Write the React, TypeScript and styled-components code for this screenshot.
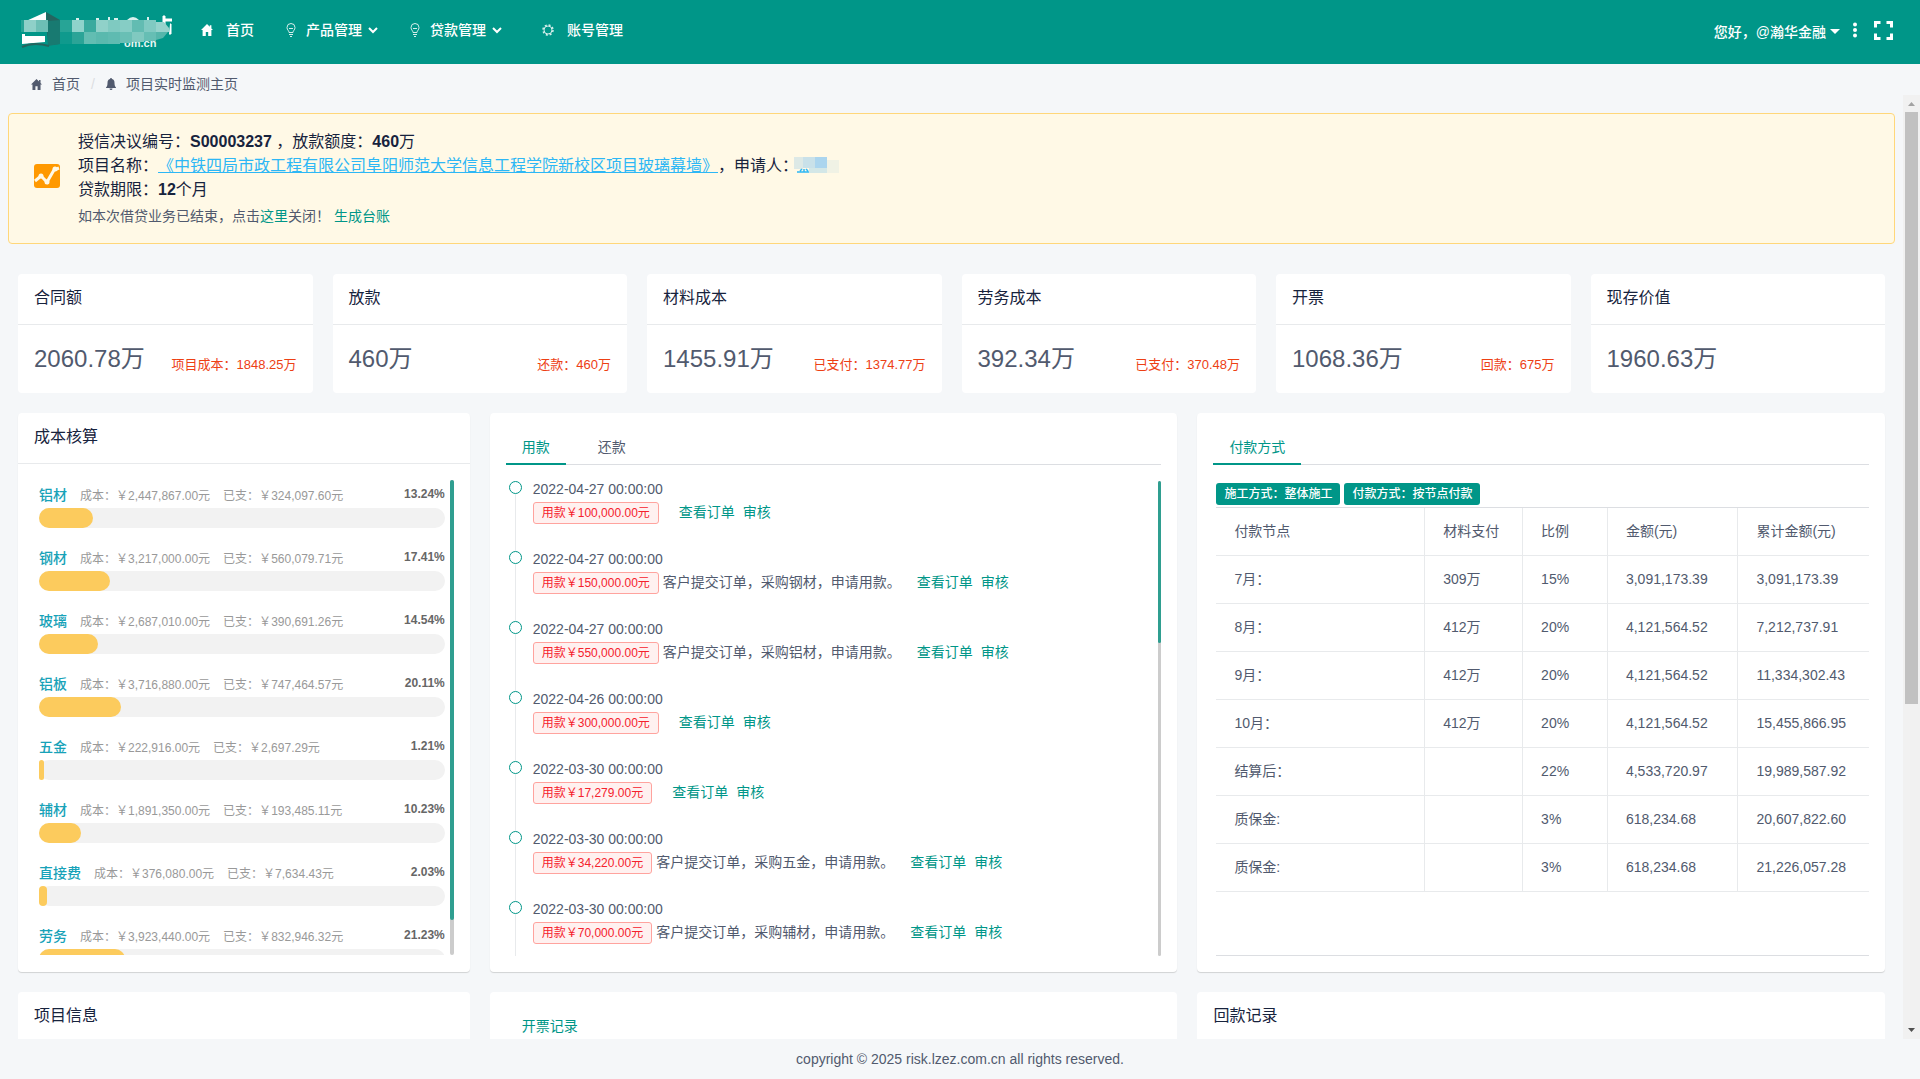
import React, { useState } from "react";
import styled, { createGlobalStyle } from "styled-components";

const GREEN = "#009688";

const GlobalStyle = createGlobalStyle`
  *, *::before, *::after { box-sizing: border-box; }
  body {
    margin: 0;
    background: #f5f7f9;
    color: #515a6e;
    font-family: "Liberation Sans", "Noto Sans CJK SC", sans-serif;
    font-size: 14px;
    line-height: 24px;
    text-spacing-trim: space-all;
  }
  h2, h3, p, ul, dl { margin: 0; padding: 0; font-weight: 400; }
  ul { list-style: none; }
  a { color: ${GREEN}; text-decoration: none; }
  button { font: inherit; border: 0; background: none; padding: 0; cursor: pointer; }
`;

const Page = styled.div`
  height: 100vh;
  display: flex;
  flex-direction: column;
`;

/* ---------- header ---------- */

const Header = styled.header`
  flex: none;
  display: flex;
  align-items: center;
  height: 64px;
  padding: 0 27px 0 20px;
  background: ${GREEN};
  color: #fff;
  font-weight: 500;
`;

const Nav = styled.nav`
  display: flex;
  flex: 1;
  align-items: center;
  gap: 32px;
  margin-left: 29px;
  padding-bottom: 4px;
`;

const NavItem = styled.a<{ $gap: number }>`
  display: flex;
  align-items: center;
  gap: ${(p) => p.$gap}px;
  color: #fff;
`;

const NavLabel = styled.span`
  display: flex;
  align-items: center;
  gap: 6px;
`;

const GearSlot = styled.span`
  display: flex;
  margin-left: 8px;
`;

const UserArea = styled.div`
  display: flex;
  align-items: center;
  button { display: flex; align-items: center; color: #fff; }
`;

const UserButton = styled.button`
  gap: 4px;
  margin-right: 12px;
  && { font-weight: 500; }
`;

const MoreButton = styled.button`
  margin-right: 16px;
`;

/* ---------- breadcrumb ---------- */

const Breadcrumb = styled.nav`
  flex: none;
  display: flex;
  align-items: center;
  height: 31px;
  padding: 9px 31px 0;
`;

const Crumb = styled.a`
  display: flex;
  align-items: center;
  gap: 10px;
  color: #515a6e;
`;

const Slash = styled.span`
  margin: 0 11px;
  color: #dcdee2;
`;

/* ---------- scrolling body ---------- */

const Body = styled.div`
  flex: 1;
  min-height: 0;
  display: flex;
`;

const Content = styled.main`
  flex: 1;
  min-width: 0;
  overflow: hidden;
  padding: 18px 8px 0;
`;

const PageScroll = styled.div`
  flex: none;
  width: 17px;
  display: flex;
  flex-direction: column;
  align-items: center;
  justify-content: space-between;
  background: #f1f1f1;
`;

const ScrollTrack = styled.div`
  flex: 1;
  align-self: stretch;
  padding: 0 2px;
`;

const ScrollThumb = styled.div`
  height: 65%;
  background: #c1c1c1;
`;

const ScrollArrow = styled.svg`
  display: block;
  width: 17px;
  height: 17px;
`;

const Alert = styled.section`
  display: flex;
  align-items: center;
  gap: 18px;
  height: 131px;
  padding: 0 25px;
  border: 1px solid #ffd77a;
  border-radius: 4px;
  background: #fff9e6;
`;

const AlertIcon = styled.svg`
  flex: none;
  width: 26px;
  height: 26px;
  margin-bottom: 6px;
`;

const AlertTitle = styled.h2`
  font-size: 16px;
  color: #17233d;
  strong { font-weight: 700; }
`;

const ProjectLink = styled.a`
  color: #2db7f5;
  text-decoration: underline;
`;

const AlertNote = styled.p`
  line-height: 22px;
  margin-top: 3px;
`;

const Masked = styled.svg`
  width: 45px;
  height: 16px;
  vertical-align: -2px;
  margin-left: -4px;
`;

const Columns = styled.div<{ $cols: string; $top: number }>`
  display: grid;
  grid-template-columns: ${(p) => p.$cols};
  margin-top: ${(p) => p.$top}px;
`;

const Cell = styled.div`
  min-width: 0;
  display: flex;
  flex-direction: column;
  padding: 0 10px;
`;

const Card = styled.section<{ $shade?: boolean }>`
  flex: 1;
  background: #fff;
  border-radius: 4px;
  box-shadow: ${(p) => (p.$shade ? "0 1px 1px rgba(0, 0, 0, 0.15)" : "none")};
`;

const CardTitle = styled.h2`
  height: 51px;
  padding: 12px 16px;
  border-bottom: 1px solid #e8eaec;
  font-size: 16px;
  color: #17233d;
`;

const StatBody = styled.div`
  display: flex;
  justify-content: space-between;
  height: 68px;
  padding: 18px 16px 0;
`;

const StatValue = styled.span`
  font-size: 24px;
  line-height: 32px;
`;

const StatNote = styled.span`
  padding-top: 10px;
  font-size: 13px;
  color: #ed4014;
`;

/* ---------- lists with a slim scrollbar ---------- */

const ListFrame = styled.div`
  display: flex;
  padding: 16px;
`;

const ListView = styled.div`
  flex: 1;
  min-width: 0;
  height: 475px;
  overflow: hidden;
`;

const SlimBar = styled.div<{ $w: number }>`
  flex: none;
  width: ${(p) => p.$w}px;
  border-radius: 2px;
  background: #ccc;
`;

const SlimThumb = styled.div<{ $share: number }>`
  height: ${(p) => p.$share}%;
  border-radius: 2px;
  background: #2f9e90;
`;

const CostItem = styled.li`
  height: 63px;
  padding: 4px 5px 0;
`;

const CostHead = styled.div`
  display: flex;
  gap: 13px;
  height: 24px;
  font-size: 12px;
  color: #999;
`;

const CostName = styled.h3`
  font-size: 14px;
  font-weight: 500;
  line-height: 22px;
  color: #17a2b8;
`;

const CostRate = styled.strong`
  margin-left: auto;
  line-height: 20px;
  color: #666;
`;

const Track = styled.div`
  height: 20px;
  border-radius: 10px;
  background: #f2f2f2;
`;

const Fill = styled.div`
  height: 100%;
  border-radius: 10px;
  background: #fccb5d;
`;

/* ---------- tabs ---------- */

const TopPad = styled.div`
  display: flow-root;
`;

const TabBar = styled.div`
  display: flex;
  gap: 16px;
  height: 36px;
  margin: 16px 16px 0;
  border-bottom: 1px solid #dcdee2;
`;

const Tab = styled.button<{ $active?: boolean }>`
  && { padding: 2px 16px 0; }
  height: 36px;
  border-bottom: 2px solid ${(p) => (p.$active ? GREEN : "transparent")};
  color: ${(p) => (p.$active ? GREEN : "#515a6e")};
`;

/* ---------- timeline ---------- */

const Event = styled.li`
  display: flex;
  gap: 11px;
  height: 70px;
  padding-left: 3px;
`;

const Rail = styled.div`
  display: flex;
  flex-direction: column;
  align-items: center;
  width: 13px;
  &::before {
    content: "";
    flex: none;
    width: 13px;
    height: 13px;
    border: 1px solid ${GREEN};
    border-radius: 50%;
  }
  &::after {
    content: "";
    flex: 1;
    width: 1px;
    background: #e8eaec;
  }
`;

const EventDate = styled.time`
  display: block;
  line-height: 17px;
  margin-bottom: 4px;
`;

const EventRow = styled.div`
  display: flex;
  gap: 4px;
  height: 22px;
  line-height: 20px;
`;

const MoneyTag = styled.span`
  padding: 0 8px;
  border: 1px solid #ffa39e;
  border-radius: 3px;
  background: #fff1f0;
  color: #f5222d;
  font-size: 12px;
`;

const EventLinks = styled.span`
  display: flex;
  gap: 8px;
  margin-left: 12px;
`;

/* ---------- payment table ---------- */

const PayPanel = styled.div`
  height: 475px;
  margin: 16px;
  padding: 2px 0 0 3px;
`;

const PayInner = styled.div`
  height: 473px;
  border-bottom: 1px solid #dcdee2;
`;

const Badges = styled.div`
  display: flex;
  gap: 4px;
  margin-bottom: 2px;
`;

const Badge = styled.span`
  padding: 0 8px;
  border-radius: 3px;
  background: ${GREEN};
  color: #fff;
  font-size: 12px;
  font-weight: 500;
  line-height: 22px;
`;

const Table = styled.table`
  width: 100%;
  table-layout: fixed;
  border-collapse: separate;
  border-spacing: 0;
  border-top: 1px solid #dcdee2;
  th, td {
    height: 48px;
    padding: 0 0 2px 18px;
    border-bottom: 1px solid #e8eaec;
    border-right: 1px solid #e8eaec;
    font-weight: 400;
    text-align: left;
  }
  th:last-child, td:last-child { border-right: 0; }
`;

const Footer = styled.footer`
  flex: none;
  height: 40px;
  line-height: 40px;
  text-align: center;
`;

/* ---------- icons ---------- */

const LogoText = styled.text`
  font-size: 11px;
  font-weight: 700;
  fill: #e6f5f3;
`;

const Logo = () => {
  const cells: [number, number, number, number, string][] = [
    [4, 10, 12, 12, "#8fd0c8"], [16, 10, 12, 12, "#6dbfb5"],
    [40, 10, 12, 12, "#27a496"], [52, 10, 12, 12, "#8fd3cb"], [64, 10, 12, 12, "#3aaa9e"], [76, 10, 12, 12, "#90d1c9"],
    [88, 10, 12, 12, "#7fcac1"], [100, 10, 12, 12, "#86cdc5"], [112, 10, 12, 12, "#62bcb2"], [124, 10, 12, 12, "#80cac2"],
    [40, 22, 12, 12, "#0f9a8d"], [52, 22, 12, 12, "#2ba497"], [64, 22, 12, 12, "#62bdb2"], [76, 22, 12, 12, "#5ab9ae"],
    [88, 22, 12, 12, "#5fbbb1"], [100, 22, 12, 11, "#69bfb5"], [112, 22, 12, 10, "#80c9c0"], [124, 22, 12, 9, "#66beb4"],
  ];
  return (
    <svg width="152" height="44" viewBox="0 0 152 44" role="img" aria-label="logo">
      <path d="M6 11 26 2v9z" fill="#fff" />
      <path d="M26 2 40 10v24l-12 1z" fill="#24655f" />
      <path d="M28 11l12-1v24l-12 2z" fill="#187a71" />
      <path d="M2 24h3v2h20v6L2 34z" fill="#fff" />
      <path d="M1 10h3v12H1z" fill="#27a496" />
      <path d="M2 37c8-4 17-4 27-1" stroke="#24655f" strokeWidth="2" fill="none" />
      <path d="M107 10q6-6 12 0zM56 8h3v2h-3zM76 8h3v2h-3zM88 7h2v3h-2zM94 8h4v2h-4zM127 7h2v3h-2z" fill="#d9f0ed" />
      <path d="M143 6h2v3h7v2h-7v5h-2zM150 14h1v10h-2" fill="#fff" stroke="#fff" />
      <LogoText x="104" y="37">om.cn</LogoText>
      {cells.map(([x, y, w, h, c], i) => (
        <rect key={i} x={x} y={y} width={w} height={h} fill={c} />
      ))}
      <path d="M136 12h8l5 6v4h-13z" fill="#96d3cc" />
      <path d="M136 22h12l-5 6-7 2z" fill="#55b6ab" />
    </svg>
  );
};

const HomeIcon = ({ size }: { size: number }) => (
  <svg width={size} height={size} viewBox="0 0 12 12" fill="currentColor" aria-hidden="true">
    <path d="M6 0 0 6h1.600v6h3.200V8h2.400v4h3.200V6H12L10.400 4.400V1.200H8.800v1.600z" />
  </svg>
);

const BulbIcon = () => (
  <svg width="10" height="14" viewBox="0 0 10 14" fill="none" stroke="#d5eeeb" aria-hidden="true">
    <path d="M3 9.500C3 7.500 1 7 1 4.500a4 4 0 0 1 8 0C9 7 7 7.500 7 9.500zM3 11.500h4M4 13.500h2M3 5l1 1 1-1 1 1 1-1" />
  </svg>
);

const GearIcon = () => (
  <svg width="12" height="12" viewBox="0 0 12 12" fill="none" stroke="#d5eeeb" aria-hidden="true">
    <circle cx="6" cy="6" r="5" strokeWidth="1.500" strokeDasharray="2 1.930" />
    <circle cx="6" cy="6" r="4" />
  </svg>
);

const Chevron = () => (
  <svg width="10" height="8" viewBox="0 0 10 8" fill="none" stroke="#fff" strokeWidth="2" aria-hidden="true">
    <path d="m1 2 4 4 4-4" />
  </svg>
);

const BellIcon = () => (
  <svg width="10" height="12" viewBox="0 0 10 12" fill="currentColor" aria-hidden="true">
    <path d="M5 0a1 1 0 0 1 1 1c2 .5 2.500 2 2.500 4 0 2.500.5 3.500 1.500 4.500v.5H0v-.5C1 8.500 1.500 7.500 1.500 5c0-2 .5-3.500 2.500-4a1 1 0 0 1 1-1zM3.500 10.500h3a1.500 1.500 0 0 1-3 0z" />
  </svg>
);

/* ---------- data ---------- */

const stats = [
  { title: "合同额", value: "2060.78万", note: "项目成本：1848.25万" },
  { title: "放款", value: "460万", note: "还款：460万" },
  { title: "材料成本", value: "1455.91万", note: "已支付：1374.77万" },
  { title: "劳务成本", value: "392.34万", note: "已支付：370.48万" },
  { title: "开票", value: "1068.36万", note: "回款：675万" },
  { title: "现存价值", value: "1960.63万", note: "" },
];

const costs = [
  { name: "铝材", cost: "2,447,867.00", paid: "324,097.60", rate: 13.24 },
  { name: "钢材", cost: "3,217,000.00", paid: "560,079.71", rate: 17.41 },
  { name: "玻璃", cost: "2,687,010.00", paid: "390,691.26", rate: 14.54 },
  { name: "铝板", cost: "3,716,880.00", paid: "747,464.57", rate: 20.11 },
  { name: "五金", cost: "222,916.00", paid: "2,697.29", rate: 1.21 },
  { name: "辅材", cost: "1,891,350.00", paid: "193,485.11", rate: 10.23 },
  { name: "直接费", cost: "376,080.00", paid: "7,634.43", rate: 2.03 },
  { name: "劳务", cost: "3,923,440.00", paid: "832,946.32", rate: 21.23 },
];

const events = [
  { date: "2022-04-27 00:00:00", sum: "100,000.00", text: "" },
  { date: "2022-04-27 00:00:00", sum: "150,000.00", text: "客户提交订单，采购钢材，申请用款。" },
  { date: "2022-04-27 00:00:00", sum: "550,000.00", text: "客户提交订单，采购铝材，申请用款。" },
  { date: "2022-04-26 00:00:00", sum: "300,000.00", text: "" },
  { date: "2022-03-30 00:00:00", sum: "17,279.00", text: "" },
  { date: "2022-03-30 00:00:00", sum: "34,220.00", text: "客户提交订单，采购五金，申请用款。" },
  { date: "2022-03-30 00:00:00", sum: "70,000.00", text: "客户提交订单，采购辅材，申请用款。" },
];

const payments = [
  ["7月：", "309万", "15%", "3,091,173.39", "3,091,173.39"],
  ["8月：", "412万", "20%", "4,121,564.52", "7,212,737.91"],
  ["9月：", "412万", "20%", "4,121,564.52", "11,334,302.43"],
  ["10月：", "412万", "20%", "4,121,564.52", "15,455,866.95"],
  ["结算后：", "", "22%", "4,533,720.97", "19,989,587.92"],
  ["质保金:", "", "3%", "618,234.68", "20,607,822.60"],
  ["质保金:", "", "3%", "618,234.68", "21,226,057.28"],
];

export default function App() {
  const [tab, setTab] = useState("用款");

  return (
    <Page lang="zh-CN">
      <GlobalStyle />
      <Header>
        <Logo />
        <Nav>
          <NavItem href="#" $gap={13}><HomeIcon size={12} />首页</NavItem>
          <NavItem href="#" $gap={10}><BulbIcon /><NavLabel>产品管理<Chevron /></NavLabel></NavItem>
          <NavItem href="#" $gap={10}><BulbIcon /><NavLabel>贷款管理<Chevron /></NavLabel></NavItem>
          <NavItem href="#" $gap={13}><GearSlot><GearIcon /></GearSlot>账号管理</NavItem>
        </Nav>
        <UserArea>
          <UserButton>
            您好，@瀚华金融
            <svg width="10" height="6" viewBox="0 0 10 6" fill="#fff" aria-hidden="true"><path d="M0 0h10L5 5z" /></svg>
          </UserButton>
          <MoreButton aria-label="更多">
            <svg width="6" height="20" viewBox="0 0 6 20" fill="#fff" aria-hidden="true">
              <circle cx="3" cy="2.500" r="2" /><circle cx="3" cy="8" r="2" /><circle cx="3" cy="13.500" r="2" />
            </svg>
          </MoreButton>
          <button aria-label="全屏">
            <svg width="19" height="22" viewBox="0 0 19 22" fill="none" stroke="#fff" strokeWidth="3" aria-hidden="true">
              <path d="M1.500 6.500v-5h5M12.500 1.500h5v5M17.500 12.500v5h-5M6.500 17.500h-5v-5" />
            </svg>
          </button>
        </UserArea>
      </Header>

      <Breadcrumb aria-label="位置">
        <Crumb href="#"><HomeIcon size={11} />首页</Crumb>
        <Slash>/</Slash>
        <Crumb href="#"><BellIcon />项目实时监测主页</Crumb>
      </Breadcrumb>

      <Body>
        <Content>
          <Alert>
            <AlertIcon viewBox="0 0 26 26" aria-hidden="true">
              <rect y="1" width="26" height="24" rx="3" fill="#ff9900" />
              <path d="M1 18 7 13l6 6 7-12 5-2" fill="none" stroke="#fff9e6" strokeWidth="3" />
              <circle cx="7" cy="13" r="2.500" fill="#fff9e6" />
              <circle cx="13" cy="19" r="2.500" fill="#fff9e6" />
              <circle cx="21" cy="6" r="2.500" fill="#fff9e6" />
            </AlertIcon>
            <div>
              <AlertTitle>授信决议编号：<strong>S00003237</strong> ，放款额度：<strong>460</strong>万</AlertTitle>
              <AlertTitle>
                项目名称：<ProjectLink href="#">《中铁四局市政工程有限公司阜阳师范大学信息工程学院新校区项目玻璃幕墙》</ProjectLink>，申请人：
                <Masked viewBox="0 0 45 16" aria-hidden="true">
                  <rect width="9" height="12" fill="#dde9e6" />
                  <rect x="9" width="12" height="11" fill="#c9e1e9" />
                  <rect x="21" width="12" height="11" fill="#abd5ee" />
                  <rect x="33" y="3" width="12" height="13" fill="#f0f2e5" />
                  <rect x="15" y="11" width="18" height="5" fill="#d3e7e7" />
                  <path d="M3 15h12M6 14l2-2M10 12v3M12 12l2 2" stroke="#2db7f5" strokeWidth="1.500" />
                </Masked>
              </AlertTitle>
              <AlertTitle>贷款期限：<strong>12</strong>个月</AlertTitle>
              <AlertNote>如本次借贷业务已结束，点击<a href="#">这里</a>关闭！ <a href="#">生成台账</a></AlertNote>
            </div>
          </Alert>

          <Columns $cols="repeat(6, 1fr)" $top={30}>
            {stats.map((s) => (
              <Cell key={s.title}>
                <Card>
                  <CardTitle>{s.title}</CardTitle>
                  <StatBody>
                    <StatValue>{s.value}</StatValue>
                    <StatNote>{s.note}</StatNote>
                  </StatBody>
                </Card>
              </Cell>
            ))}
          </Columns>

          <Columns $cols="2fr 3fr 3fr" $top={20}>
            <Cell>
              <Card $shade>
                <CardTitle>成本核算</CardTitle>
                <ListFrame>
                  <ListView>
                    <ul>
                      {costs.map((c) => (
                        <CostItem key={c.name}>
                          <CostHead>
                            <CostName>{c.name}</CostName>
                            <span>成本：￥{c.cost}元</span>
                            <span>已支：￥{c.paid}元</span>
                            <CostRate>{c.rate.toFixed(2)}%</CostRate>
                          </CostHead>
                          <Track role="progressbar" aria-label={c.name} aria-valuenow={c.rate}>
                            <Fill style={{ width: `${c.rate}%` }} />
                          </Track>
                        </CostItem>
                      ))}
                    </ul>
                  </ListView>
                  <SlimBar $w={4}><SlimThumb $share={92.6} /></SlimBar>
                </ListFrame>
              </Card>
            </Cell>

            <Cell>
              <Card $shade>
                <TopPad>
                  <TabBar role="tablist">
                    {["用款", "还款"].map((t) => (
                      <Tab key={t} role="tab" aria-selected={tab === t} $active={tab === t} onClick={() => setTab(t)}>{t}</Tab>
                    ))}
                  </TabBar>
                </TopPad>
                <ListFrame>
                  <ListView>
                    <ul>
                      {events.map((e, i) => (
                        <Event key={i}>
                          <Rail />
                          <div>
                            <EventDate>{e.date}</EventDate>
                            <EventRow>
                              <MoneyTag>用款￥{e.sum}元</MoneyTag>
                              <span>{e.text}</span>
                              <EventLinks><a href="#">查看订单</a><a href="#">审核</a></EventLinks>
                            </EventRow>
                          </div>
                        </Event>
                      ))}
                    </ul>
                  </ListView>
                  <SlimBar $w={3}><SlimThumb $share={34} /></SlimBar>
                </ListFrame>
              </Card>
            </Cell>

            <Cell>
              <Card $shade>
                <TopPad>
                  <TabBar role="tablist"><Tab role="tab" aria-selected $active>付款方式</Tab></TabBar>
                </TopPad>
                <PayPanel>
                  <PayInner>
                    <Badges><Badge>施工方式：整体施工</Badge><Badge>付款方式：按节点付款</Badge></Badges>
                    <Table>
                      <colgroup>
                        <col width="32%" /><col width="15%" /><col width="13%" /><col width="20%" /><col width="20%" />
                      </colgroup>
                      <thead>
                        <tr><th>付款节点</th><th>材料支付</th><th>比例</th><th>金额(元)</th><th>累计金额(元)</th></tr>
                      </thead>
                      <tbody>
                        {payments.map((row, i) => (
                          <tr key={i}>{row.map((v, j) => <td key={j}>{v}</td>)}</tr>
                        ))}
                      </tbody>
                    </Table>
                  </PayInner>
                </PayPanel>
              </Card>
            </Cell>
          </Columns>

          <Columns $cols="2fr 3fr 3fr" $top={20}>
            <Cell><Card><CardTitle>项目信息</CardTitle></Card></Cell>
            <Cell>
              <Card>
                <TopPad>
                  <TabBar role="tablist"><Tab role="tab" aria-selected $active>开票记录</Tab></TabBar>
                </TopPad>
              </Card>
            </Cell>
            <Cell><Card><CardTitle>回款记录</CardTitle></Card></Cell>
          </Columns>
        </Content>

        <PageScroll aria-hidden="true">
          <ScrollArrow viewBox="0 0 17 17"><path d="M5 11h7L8.500 7z" fill="#a3a3a3" /></ScrollArrow>
          <ScrollTrack><ScrollThumb /></ScrollTrack>
          <ScrollArrow viewBox="0 0 17 17"><path d="M5 6h7l-3.500 4z" fill="#505050" /></ScrollArrow>
        </PageScroll>
      </Body>

      <Footer>copyright © 2025 risk.lzez.com.cn all rights reserved.</Footer>
    </Page>
  );
}
